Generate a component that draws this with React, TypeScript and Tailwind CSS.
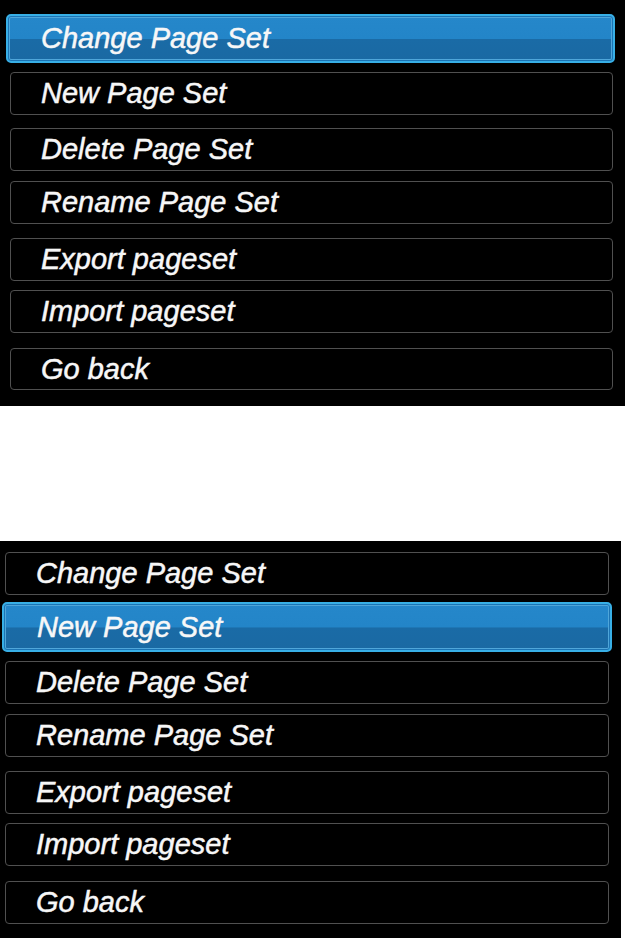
const labels = [
  "Change Page Set",
  "New Page Set",
  "Delete Page Set",
  "Rename Page Set",
  "Export pageset",
  "Import pageset",
  "Go back",
];

type Slot = { box: string; active?: boolean };

// hand-measured offsets for each row, the rows don't sit on an even grid
const topMenu: Slot[] = [
  { box: "mt-[14px] ml-[6px] h-[49px] w-[609px] pl-[33px]", active: true },
  { box: "mt-[9px] ml-[10px] h-[43px] w-[603px] pl-[30px]" },
  { box: "mt-[13px] ml-[10px] h-[43px] w-[603px] pl-[30px]" },
  { box: "mt-[10px] ml-[10px] h-[43px] w-[603px] pl-[30px]" },
  { box: "mt-[14px] ml-[10px] h-[43px] w-[603px] pl-[30px]" },
  { box: "mt-[9px] ml-[10px] h-[43px] w-[603px] pl-[30px]" },
  { box: "mt-[15px] ml-[10px] h-[42px] w-[603px] pl-[30px]" },
];

const bottomMenu: Slot[] = [
  { box: "mt-[11px] ml-[5px] h-[43px] w-[604px] pl-[30px]" },
  { box: "mt-[7px] ml-[2px] h-[50px] w-[610px] pl-[33px]", active: true },
  { box: "mt-[9px] ml-[5px] h-[43px] w-[604px] pl-[30px]" },
  { box: "mt-[10px] ml-[5px] h-[43px] w-[604px] pl-[30px]" },
  { box: "mt-[14px] ml-[5px] h-[43px] w-[604px] pl-[30px]" },
  { box: "mt-[9px] ml-[5px] h-[43px] w-[604px] pl-[30px]" },
  { box: "mt-[15px] ml-[5px] h-[43px] w-[604px] pl-[30px]" },
];

function MenuButton({ label, slot }: { label: string; slot: Slot }) {
  return (
    <div
      className={`flex shrink-0 items-center ${slot.box} ${
        slot.active
          ? "rounded-[5px] border-2 border-[#38afe6] bg-[linear-gradient(to_bottom,#2587ca_0%,#2385c8_50%,#1a6ba6_52%,#1a69a3_100%)] shadow-[inset_0_0_0_1px_#1c74b4,inset_0_0_0_2px_#4fa6da]"
          : "rounded-[4px] border border-[#505050] bg-black"
      }`}
    >
      <span className="font-['Liberation_Sans',Arial,sans-serif] text-[29px] italic leading-none text-[#f7f7f7] [-webkit-text-stroke:0.4px_#f7f7f7] [text-shadow:0_0_1px_rgba(255,255,255,0.3)]">
        {label}
      </span>
    </div>
  );
}

function MenuPanel({ slots, panel }: { slots: Slot[]; panel: string }) {
  return (
    <div className={`flex flex-col bg-black ${panel}`}>
      {labels.map((label, i) => (
        <MenuButton key={label} label={label} slot={slots[i]} />
      ))}
    </div>
  );
}

export default function App() {
  return (
    <div className="h-[938px] w-[626px] overflow-hidden bg-white">
      <MenuPanel slots={topMenu} panel="h-[406px] w-[625px]" />
      <div className="h-[135px]" />
      <MenuPanel slots={bottomMenu} panel="h-[397px] w-[621px]" />
    </div>
  );
}
